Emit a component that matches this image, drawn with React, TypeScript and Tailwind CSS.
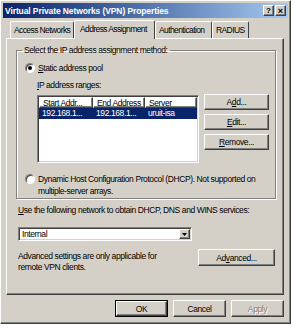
import React from 'react'

const raised =
  'border border-t-white border-l-white border-r-[#404040] border-b-[#404040] shadow-[inset_-1px_-1px_0_#808080]'
const sunken =
  'border border-t-[#808080] border-l-[#808080] border-r-white border-b-white shadow-[inset_1px_1px_0_#404040,inset_-1px_-1px_0_#d4d0c8]'

function Btn({
  children,
  className = '',
  disabled,
}: {
  children: React.ReactNode
  className?: string
  disabled?: boolean
}) {
  return (
    <div
      className={`flex items-center justify-center bg-[#d4d0c8] ${raised} ${className} ${
        disabled ? 'text-[#808080] [text-shadow:1px_1px_0_#fff]' : 'text-black'
      }`}
    >
      {children}
    </div>
  )
}

function Radio({ checked }: { checked?: boolean }) {
  return (
    <span className="flex h-[10px] w-[10px] shrink-0 items-center justify-center rounded-full border border-t-[#808080] border-l-[#808080] border-r-white border-b-white bg-white shadow-[inset_1px_1px_0_#404040]">
      {checked && <span className="h-[4px] w-[4px] rounded-full bg-black" />}
    </span>
  )
}

function Tab({ label, width, active }: { label: string; width: number; active?: boolean }) {
  return (
    <div
      style={{ width }}
      className={`flex items-center whitespace-nowrap rounded-t-[2px] border-t border-l border-r border-t-white border-l-white border-r-[#404040] bg-[#d4d0c8] tracking-[-0.6px] ${
        active ? 'relative z-10 -mb-px h-[19px] pb-[2px] pl-[5px]' : 'h-[17px] pl-[3px]'
      }`}
    >
      {label}
    </div>
  )
}

export default function App() {
  return (
    <div className="h-[330px] w-[297px] bg-white font-['Liberation_Sans',Arial,sans-serif] text-[8.5px] leading-[12px] tracking-[-0.4px] text-black">
      <div
        className={`flex h-[324px] w-[291px] flex-col bg-[#d4d0c8] ${raised} shadow-[inset_-1px_-1px_0_#808080,3px_3px_2px_rgba(0,0,0,0.55)]`}
      >
        {/* title bar */}
        <div className="mt-[2px] ml-[2px] flex h-[15px] w-[285px] items-center justify-between bg-gradient-to-r from-[#0a246a] to-[#a6caf0] pr-[2px] pl-[2px]">
          <span className="text-[8.5px] font-bold tracking-[-0.1px] text-white">
            Virtual Private Networks (VPN) Properties
          </span>
          <div className="flex">
            <div className={`flex h-[11px] w-[11px] items-center justify-center bg-[#d4d0c8] text-[8px] font-bold tracking-normal ${raised}`}>
              ?
            </div>
            <div className={`ml-[1px] flex h-[11px] w-[11px] items-center justify-center bg-[#d4d0c8] text-[9px] font-bold tracking-normal ${raised}`}>
              ×
            </div>
          </div>
        </div>

        <div className="mt-[2px] pl-[5px]">
          {/* tabs */}
          <div className="flex items-end pl-[4px]">
            <Tab label="Access Networks" width={64} />
            <Tab label="Address Assignment" width={81} active />
            <Tab label="Authentication" width={57} />
            <Tab label="RADIUS" width={37} />
          </div>

          {/* panel */}
          <div className={`h-[257px] w-[278px] pt-[6px] pl-[9px] ${raised}`}>
            <fieldset className="h-[154px] w-[260px] border border-[#808080] pr-0 pl-[8px] shadow-[1px_1px_0_#fff,inset_1px_1px_0_#fff]">
              <legend className="-ml-[3px] px-[2px] leading-[10px]">Select the IP address assignment method:</legend>
              <div className="mt-[7px] flex items-center gap-[3px]">
                <Radio checked />
                <span>
                  <u>S</u>tatic address pool
                </span>
              </div>
              <div className="mt-[5px] pl-[12px]">
                <u>I</u>P address ranges:
              </div>
              <div className="mt-[4px] flex items-start pl-[12px]">
                <div className={`h-[68px] w-[162px] bg-white p-[1px] ${sunken}`}>
                  <div className="flex h-[11px] leading-[11px]">
                    <div className={`w-[54px] pl-[3px] ${raised}`}>Start Addr...</div>
                    <div className={`w-[52px] pl-[3px] ${raised}`}>End Address</div>
                    <div className={`flex-1 pl-[3px] ${raised}`}>Server</div>
                  </div>
                  <div className="flex h-[11px] bg-[#0a246a] leading-[11px] text-white">
                    <div className="w-[54px] pl-[3px]">192.168.1...</div>
                    <div className="w-[52px] pl-[3px]">192.168.1...</div>
                    <div className="flex-1 pl-[3px]">uruit-isa</div>
                  </div>
                </div>
                <div className="-mt-px ml-[5px] flex flex-col gap-[4px]">
                  <Btn className="h-[16px] w-[65px]">
                    A<u>d</u>d...
                  </Btn>
                  <Btn className="h-[16px] w-[65px]">
                    <u>E</u>dit...
                  </Btn>
                  <Btn className="h-[16px] w-[65px]">
                    <u>R</u>emove...
                  </Btn>
                </div>
              </div>
              <div className="mt-[10px] flex items-start gap-[3px]">
                <span className="mt-[1px]">
                  <Radio />
                </span>
                <span className="whitespace-nowrap">
                  Dynamic Host Configuration Protocol (DHCP). Not supported on
                  <br />
                  multiple-server arrays.
                </span>
              </div>
            </fieldset>

            <div className="mt-[5px] whitespace-nowrap pl-[2px]">
              <u>U</u>se the following network to obtain DHCP, DNS and WINS services:
            </div>
            <div className={`mt-[11px] ml-[2px] flex h-[14px] w-[174px] items-center bg-white pl-[3px] ${sunken}`}>
              <span className="flex-1">Internal</span>
              <div className={`mr-[1px] flex h-[10px] w-[11px] items-center justify-center bg-[#d4d0c8] ${raised}`}>
                <svg width="5" height="3" viewBox="0 0 5 3">
                  <path d="M0 0h5L2.5 3z" fill="#000" />
                </svg>
              </div>
            </div>
            <div className="mt-[8px] flex items-start pl-[2px]">
              <div className="w-[176px] whitespace-nowrap pt-[2px] leading-[11px]">
                Advanced settings are only applicable for
                <br />
                remote VPN clients.
              </div>
              <Btn className="ml-[4px] h-[17px] w-[77px]">
                Ad<u>v</u>anced...
              </Btn>
            </div>
          </div>

          {/* dialog buttons */}
          <div className="mt-[5px] flex w-[278px] justify-end gap-[5px]">
            <div className="border border-black">
              <Btn className="h-[15px] w-[51px]">OK</Btn>
            </div>
            <Btn className="h-[17px] w-[53px]">Cancel</Btn>
            <Btn className="h-[17px] w-[53px]" disabled>
              Apply
            </Btn>
          </div>
        </div>
      </div>
    </div>
  )
}
